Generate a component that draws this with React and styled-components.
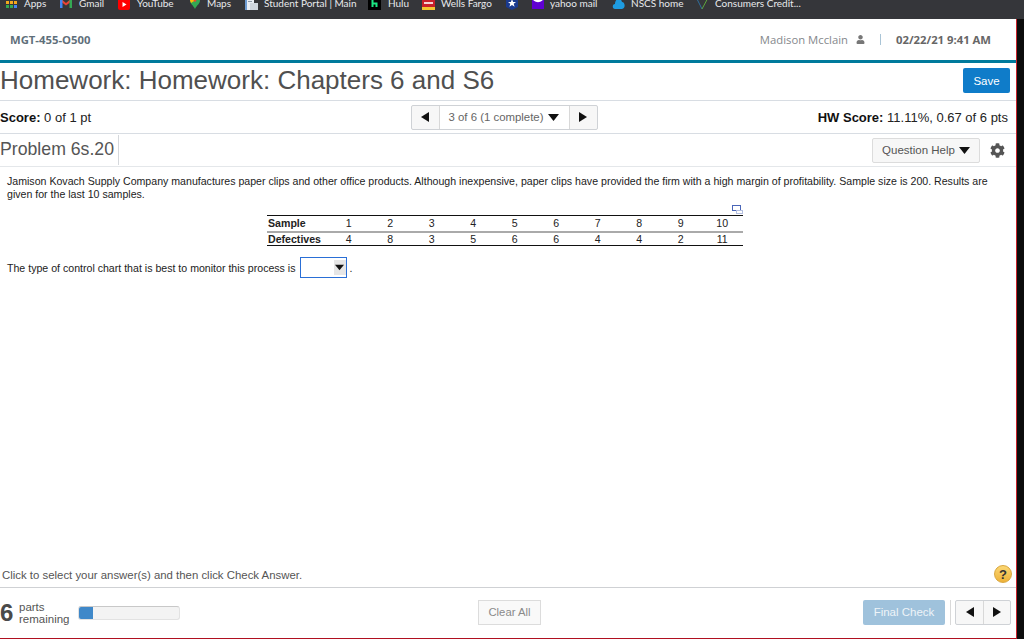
import React from 'react'
import styled, {createGlobalStyle} from 'styled-components'
import {FaUser, FaCog} from 'react-icons/fa'

const Global = createGlobalStyle`
    html, body {
        margin: 0;
        padding: 0;
        background: #fff;
    }
    * {
        box-sizing: border-box;
    }
`

const Page = styled.div`
    display: flex;
    flex-direction: column;
    width: 1024px;
    height: 639px;
    overflow: hidden;
    background: #0c0c0c;
    font-family: 'Liberation Sans', Arial, sans-serif;
`

const BookmarkBar = styled.div`
    display: flex;
    flex: 0 0 19px;
    align-items: flex-start;
    padding-left: 6px;
    overflow: hidden;
    background: #35363a;
`

const Bookmark = styled.div`
    display: flex;
    flex: 0 0 auto;
    align-items: center;
    gap: ${props => props.$gap || 6}px;
    width: ${props => props.$width}px;
    height: 14px;
    margin-top: -4px;
    font-family: Lato, sans-serif;
    font-size: 10px;
    line-height: 14px;
    color: #e8eaed;
    white-space: nowrap;
`

const Main = styled.div`
    display: flex;
    flex-direction: column;
    width: 1017px;
    height: 620px;
    background: #fff;
    border-right: 1px solid #c8232c;
    border-bottom: 1px solid #b01020;
`

const CourseBar = styled.div`
    display: flex;
    flex: 0 0 41px;
    align-items: center;
    justify-content: space-between;
    padding: 0 25px 0 10px;
    font-family: 'Open Sans', sans-serif;
    font-size: 11.3px;
    color: #6d7075;
`

const CourseName = styled.span`
    font-weight: 700;
    color: #5f6f7a;
`

const UserInfo = styled.div`
    display: flex;
    align-items: center;
`

const UserName = styled.span`
    margin-right: 8px;
    color: #85888c;
`

const Divider = styled.span`
    width: 1px;
    height: 11px;
    margin: 0 15px;
    background: #a9c4d6;
`

const DateText = styled.span`
    font-weight: 700;
    color: #666;
`

const TitleRow = styled.div`
    display: flex;
    flex: 0 0 41px;
    align-items: center;
    justify-content: space-between;
    padding-right: 6px;
    border-top: 3px solid #007a9c;
    border-bottom: 1px solid #d8dde3;
`

const Title = styled.h1`
    margin: 0 0 2px;
    font-size: 26px;
    font-weight: 400;
    line-height: 35px;
    color: #505050;
`

const SaveButton = styled.button`
    width: 47px;
    height: 25px;
    margin-bottom: 2px;
    padding: 0;
    border: 0;
    border-radius: 2px;
    background: #0f7cc9;
    font-family: inherit;
    font-size: 11.5px;
    color: #fff;
`

const ScoreRow = styled.div`
    display: grid;
    flex: 0 0 33px;
    grid-template-columns: 1fr auto 1fr;
    align-items: center;
    padding-right: 8px;
    border-bottom: 1px solid #d8dde3;
    font-size: 13px;
    color: #222;
`

const Score = styled.div`
    justify-self: ${props => (props.$right ? 'end' : 'start')};

    b {
        color: #111;
    }
`

const Pager = styled.div`
    display: flex;
    height: 25px;
    border: 1px solid #cfd2d6;
    border-radius: 2px;
    background: #f7f7f7;
`

const PagerSide = styled.div`
    display: flex;
    align-items: center;
    justify-content: center;
    width: ${props => props.$width}px;
    border-left: ${props => (props.$divide ? '1px solid #d8d8d8' : '0')};
`

const PagerLabel = styled.div`
    display: flex;
    align-items: center;
    gap: 5px;
    width: 130px;
    padding-left: 9px;
    border-left: 1px solid #d8d8d8;
    background: #fff;
    font-size: 11.4px;
    color: #666;
    white-space: nowrap;
`

const ProblemRow = styled.div`
    display: flex;
    flex: 0 0 33px;
    align-items: stretch;
    justify-content: space-between;
    padding-right: 11px;
    border-bottom: 1px solid #e4e7ea;
`

const ProblemTitle = styled.h2`
    display: flex;
    align-items: center;
    margin: 1px 0;
    padding: 0 4px 2px 0;
    border-right: 1px solid #d5d8dc;
    font-size: 17.7px;
    font-weight: 400;
    color: #555;
`

const ProblemTools = styled.div`
    display: flex;
    align-items: center;
    gap: 10px;
    color: #555;
`

const HelpButton = styled.button`
    display: flex;
    align-items: center;
    justify-content: center;
    gap: 4px;
    width: 108px;
    height: 25px;
    padding: 0;
    border: 1px solid #dcdcdc;
    border-radius: 2px;
    background: #f7f7f7;
    font-family: inherit;
    font-size: 11.5px;
    color: #555;
`

const Content = styled.div`
    flex: 1;
    min-height: 0;
    padding: 8px 15px 0 7px;
    color: #222;
    font-size: 10.6px;
`

const Question = styled.p`
    margin: 0;
    line-height: 13px;
`

const TableWrap = styled.div`
    position: relative;
    width: 476px;
    margin: 14px 0 0 260px;
`

const ExpandIcon = styled.svg`
    position: absolute;
    top: -10px;
    right: 0;
`

const DataTable = styled.table`
    width: 100%;
    border-collapse: collapse;
    table-layout: fixed;
    border-top: 1px solid #111;
    border-bottom: 1px solid #111;
    font-size: 10.6px;
`

const Row = styled.tr`
    height: ${props => (props.$divide ? 16 : 14)}px;
    border-bottom: ${props => (props.$divide ? '2px solid #aaa' : '0')};

    th, td {
        vertical-align: ${props => (props.$divide ? 'middle' : 'top')};
    }
`

const HeadCell = styled.th`
    width: 61px;
    padding: 0 0 0 1px;
    text-align: left;
    font-weight: 700;
    color: #222;
`

const Cell = styled.td`
    padding: 0;
    text-align: center;
`

const AnswerLine = styled.div`
    display: flex;
    align-items: center;
    gap: 4px;
    margin-top: 11px;
`

const Dropdown = styled.div`
    display: flex;
    justify-content: flex-end;
    align-items: center;
    width: 47px;
    height: 21px;
    margin-right: -1px;
    border: 1px solid #2a6fd6;
`

const DropdownArrow = styled.div`
    display: flex;
    align-items: center;
    justify-content: center;
    width: 12px;
    height: 15px;
    background: #e6e6e6;
`

const HintRow = styled.div`
    display: flex;
    flex: 0 0 31px;
    align-items: center;
    justify-content: space-between;
    padding: 5px 4px 0 2px;
    border-bottom: 1px solid #cfd1d4;
    font-size: 11.4px;
    color: #555;
`

const HintBadge = styled.div`
    display: flex;
    align-items: center;
    justify-content: center;
    width: 18px;
    height: 18px;
    margin-top: -1px;
    border: 1px solid #d9a63c;
    border-radius: 50%;
    background: linear-gradient(#fbd774, #eeb238);
    font-size: 13px;
    font-weight: 700;
    color: #333;
`

const Footer = styled.div`
    display: grid;
    flex: 0 0 50px;
    grid-template-columns: 1fr auto 1fr;
    align-items: center;
    padding: 0 5px 2px 0;
`

const Parts = styled.div`
    display: flex;
    align-items: center;
    margin-top: 1px;
`

const PartsCount = styled.span`
    width: 19px;
    font-size: 24px;
    font-weight: 700;
    line-height: 24px;
    color: #4a4a4a;
`

const PartsLabel = styled.span`
    width: 59px;
    font-size: 11.5px;
    line-height: 12px;
    color: #555;
`

const Progress = styled.div`
    width: 102px;
    height: 14px;
    overflow: hidden;
    border: 1px solid #e2e2e2;
    border-top-color: #c8c8c8;
    border-radius: 3px;
    background: #f3f3f3;
`

const ProgressFill = styled.div`
    height: 100%;
    background: #3f88c9;
`

const ClearButton = styled.button`
    width: 63px;
    height: 25px;
    margin-left: 8px;
    padding: 0;
    border: 1px solid #dcdcdc;
    background: #f9f9f9;
    font-family: inherit;
    font-size: 11.3px;
    color: #8a8a8a;
`

const FooterActions = styled.div`
    display: flex;
    align-items: center;
    justify-self: end;
`

const FinalButton = styled.button`
    width: 82px;
    height: 25px;
    padding: 0;
    border: 0;
    border-radius: 2px;
    background: #9fc2dc;
    font-family: inherit;
    font-size: 11.5px;
    color: #eef4f8;
`

const ActionSep = styled.span`
    width: 1px;
    height: 25px;
    margin: 0 4px 0 5px;
    background: #d9d9d9;
`

const Triangle = ({dir = 'down', size = 8}) => {
    const points = {
        down: '0,1 10,1 5,9',
        left: '8,0 8,10 0,5',
        right: '0,0 8,5 0,10',
    }
    const box = dir === 'down' ? '0 0 10 10' : '0 0 8 10'
    return (
        <svg width={dir === 'down' ? size + 3 : size} height={dir === 'down' ? size + 1 : size + 2} viewBox={box} preserveAspectRatio="none">
            <polygon points={points[dir]} fill="#111" />
        </svg>
    )
}

const GridIcon = () => (
    <svg width="12" height="12" viewBox="0 0 12 12">
        {['#ea6a35', '#f2a81d', '#34a853'].map((color, y) => [0, 4, 8].map(x => (
            <rect key={x + color} x={x} y={y * 4} width="3" height="3" fill={x === 8 && y === 2 ? '#4285f4' : color} />
        )))}
    </svg>
)

const GmailIcon = () => (
    <svg width="12" height="12" viewBox="0 0 12 12">
        <path d="M0 1 L6 6 L12 1 V4 L6 8.5 L0 4 Z" fill="#ea4335" />
        <rect y="1" width="2.5" height="10" fill="#4285f4" />
        <rect x="9.5" y="1" width="2.5" height="10" fill="#34a853" />
    </svg>
)

const YoutubeIcon = () => (
    <svg width="12" height="13" viewBox="0 0 12 13">
        <rect width="12" height="13" rx="2" fill="#f00" />
        <polygon points="4.5,5 8.5,7.5 4.5,10" fill="#fff" />
    </svg>
)

const MapsIcon = () => (
    <svg width="10" height="12" viewBox="0 0 10 12">
        <path d="M5 12 C3 8 0 6.5 0 3.5 C0 1.5 2 0 5 0 C8 0 10 1.5 10 3.5 C10 6.5 7 8 5 12 Z" fill="#34a853" />
        <path d="M0 3.5 C0 1.5 2 0 5 0 L5 3.5 L1 6 Z" fill="#fbbc04" />
        <circle cx="5" cy="3.5" r="1.3" fill="#ea4335" />
    </svg>
)

const PortalIcon = () => (
    <svg width="13" height="14" viewBox="0 0 13 14">
        <rect x="0" y="0" width="9" height="14" fill="#e8edf3" />
        <rect x="0" y="0" width="2" height="14" fill="#6d9bd1" />
        <rect x="5" y="7" width="8" height="7" fill="#cfd6de" />
        <rect x="3" y="5" width="4" height="1" fill="#8b97a5" />
    </svg>
)

const HuluIcon = () => (
    <svg width="13" height="14" viewBox="0 0 13 14">
        <rect width="13" height="14" fill="#000" />
        <path d="M4.5 4 V11 M4.5 7.5 H8.5 V11" stroke="#1ce783" strokeWidth="2" fill="none" />
    </svg>
)

const FargoIcon = () => (
    <svg width="13" height="14" viewBox="0 0 13 14">
        <rect width="13" height="11" fill="#c8202a" />
        <rect y="11" width="13" height="3" fill="#f4c430" />
        <rect x="2" y="6" width="9" height="2" fill="#f5d5d5" />
    </svg>
)

const StarIcon = () => (
    <svg width="12" height="14" viewBox="0 0 12 14">
        <path d="M0 0 H12 V11 L6 14 L0 11 Z" fill="#1a3a8f" />
        <polygon points="6,3 7.1,6 10,6 7.7,7.8 8.6,10.8 6,9 3.4,10.8 4.3,7.8 2,6 4.9,6" fill="#fff" />
    </svg>
)

const YahooIcon = () => (
    <svg width="12" height="12" viewBox="0 0 12 12">
        <rect width="12" height="12" fill="#5f01d1" />
        <path d="M1.5 0 H10.5 V3.5 Q6 7 1.5 3.5 Z" fill="#fff" />
    </svg>
)

const NscsIcon = () => (
    <svg width="13" height="11" viewBox="0 0 13 11">
        <path d="M3 11 C0 11 0 6 3 6 C3 0 9 -1 10 4 C13 4 14 10 10 11 Z" fill="#1e9be0" />
    </svg>
)

const CheckIcon = () => (
    <svg width="13" height="14" viewBox="0 0 13 14">
        <path d="M0.5 4 L5 13" stroke="#2f6f9f" strokeWidth="1" fill="none" />
        <path d="M5 13 L12 0" stroke="#5fa83c" strokeWidth="1" fill="none" />
    </svg>
)

const bookmarks = [
    {label: 'Apps', icon: <GridIcon />, width: 54},
    {label: 'Gmail', icon: <GmailIcon />, width: 58, gap: 7},
    {label: 'YouTube', icon: <YoutubeIcon />, width: 72, gap: 7},
    {label: 'Maps', icon: <MapsIcon />, width: 55, gap: 7},
    {label: 'Student Portal | Main', icon: <PortalIcon />, width: 123, gap: 6},
    {label: 'Hulu', icon: <HuluIcon />, width: 54, gap: 7},
    {label: 'Wells Fargo', icon: <FargoIcon />, width: 84, gap: 6},
    {label: '', icon: <StarIcon />, width: 26},
    {label: 'yahoo mail', icon: <YahooIcon />, width: 80, gap: 6},
    {label: 'NSCS home', icon: <NscsIcon />, width: 85, gap: 6},
    {label: 'Consumers Credit...', icon: <CheckIcon />, width: 120, gap: 5},
]

const sampleNumbers = [1, 2, 3, 4, 5, 6, 7, 8, 9, 10]
const defectives = [4, 8, 3, 5, 6, 6, 4, 4, 2, 11]

class App extends React.Component {
    render() {
        return (
            <Page>
                <Global />
                <BookmarkBar>
                    {bookmarks.map(b => (
                        <Bookmark key={b.label + b.width} $width={b.width} $gap={b.gap}>
                            {b.icon}
                            {b.label}
                        </Bookmark>
                    ))}
                </BookmarkBar>

                <Main>
                    <CourseBar>
                        <CourseName>MGT-455-O500</CourseName>
                        <UserInfo>
                            <UserName>Madison Mcclain</UserName>
                            <FaUser size={9} color="#777" />
                            <Divider />
                            <DateText>02/22/21 9:41 AM</DateText>
                        </UserInfo>
                    </CourseBar>

                    <TitleRow>
                        <Title>Homework: Homework: Chapters 6 and S6</Title>
                        <SaveButton>Save</SaveButton>
                    </TitleRow>

                    <ScoreRow>
                        <Score><b>Score:</b> 0 of 1 pt</Score>
                        <Pager>
                            <PagerSide $width={27}><Triangle dir="left" /></PagerSide>
                            <PagerLabel>3 of 6 (1 complete) <Triangle /></PagerLabel>
                            <PagerSide $width={28} $divide><Triangle dir="right" /></PagerSide>
                        </Pager>
                        <Score $right><b>HW Score:</b> 11.11%, 0.67 of 6 pts</Score>
                    </ScoreRow>

                    <ProblemRow>
                        <ProblemTitle>Problem 6s.20</ProblemTitle>
                        <ProblemTools>
                            <HelpButton>Question Help <Triangle /></HelpButton>
                            <FaCog size={15} color="#555" />
                        </ProblemTools>
                    </ProblemRow>

                    <Content>
                        <Question>
                            Jamison Kovach Supply Company manufactures paper clips and other office products. Although inexpensive, paper clips have provided the firm with a high margin of profitability. Sample size is 200. Results are given for the last 10 samples.
                        </Question>

                        <TableWrap>
                            <ExpandIcon width="11" height="9" viewBox="0 0 11 9">
                                <rect x="0.5" y="0.5" width="8" height="5" fill="none" stroke="#4a66b8" />
                                <rect x="4.5" y="5.5" width="6" height="3" fill="none" stroke="#b4bfe0" />
                            </ExpandIcon>
                            <DataTable>
                                <tbody>
                                    <Row $divide>
                                        <HeadCell>Sample</HeadCell>
                                        {sampleNumbers.map(n => <Cell key={n}>{n}</Cell>)}
                                    </Row>
                                    <Row>
                                        <HeadCell>Defectives</HeadCell>
                                        {defectives.map((n, i) => <Cell key={i}>{n}</Cell>)}
                                    </Row>
                                </tbody>
                            </DataTable>
                        </TableWrap>

                        <AnswerLine>
                            The type of control chart that is best to monitor this process is
                            <Dropdown>
                                <DropdownArrow><Triangle size={6} /></DropdownArrow>
                            </Dropdown>
                            .
                        </AnswerLine>
                    </Content>

                    <HintRow>
                        Click to select your answer(s) and then click Check Answer.
                        <HintBadge>?</HintBadge>
                    </HintRow>

                    <Footer>
                        <Parts>
                            <PartsCount>6</PartsCount>
                            <PartsLabel>parts<br />remaining</PartsLabel>
                            <Progress>
                                <ProgressFill style={{width: (1 / 7 * 100) + '%'}} />
                            </Progress>
                        </Parts>
                        <ClearButton>Clear All</ClearButton>
                        <FooterActions>
                            <FinalButton>Final Check</FinalButton>
                            <ActionSep />
                            <Pager>
                                <PagerSide $width={27}><Triangle dir="left" /></PagerSide>
                                <PagerSide $width={27} $divide><Triangle dir="right" /></PagerSide>
                            </Pager>
                        </FooterActions>
                    </Footer>
                </Main>
            </Page>
        )
    }
}

export default App
